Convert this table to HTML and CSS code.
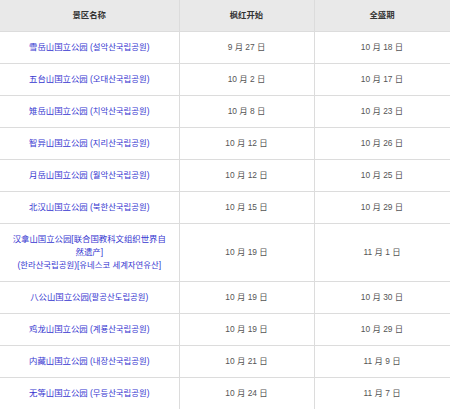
FILE: index.html
```html
<!DOCTYPE html>
<html lang="zh">
<head>
<meta charset="utf-8">
<title>枫叶时期</title>
<link rel="stylesheet" href="styles.css">
</head>
<body>
<table class="maple">
  <colgroup>
    <col class="c-name">
    <col class="c-start">
    <col class="c-peak">
  </colgroup>
  <thead>
    <tr><th>景区名称</th><th>枫红开始</th><th>全盛期</th></tr>
  </thead>
  <tbody>
    <tr><td><a href="#">雪岳山国立公园 (설악산국립공원)</a></td><td>9 月 27 日</td><td>10 月 18 日</td></tr>
    <tr><td><a href="#">五台山国立公园 (오대산국립공원)</a></td><td>10 月 2 日</td><td>10 月 17 日</td></tr>
    <tr><td><a href="#">雉岳山国立公园 (치악산국립공원)</a></td><td>10 月 8 日</td><td>10 月 23 日</td></tr>
    <tr><td><a href="#">智异山国立公园 (지리산국립공원)</a></td><td>10 月 12 日</td><td>10 月 26 日</td></tr>
    <tr><td><a href="#">月岳山国立公园 (월악산국립공원)</a></td><td>10 月 12 日</td><td>10 月 25 日</td></tr>
    <tr><td><a href="#">北汉山国立公园 (북한산국립공원)</a></td><td>10 月 15 日</td><td>10 月 29 日</td></tr>
    <tr><td><a href="#">汉拿山国立公园[联合国教科文组织世界自然遗产]<br>(한라산국립공원)[유네스코 세계자연유산]</a></td><td>10 月 19 日</td><td>11 月 1 日</td></tr>
    <tr><td><a href="#">八公山国立公园(팔공산도립공원)</a></td><td>10 月 19 日</td><td>10 月 30 日</td></tr>
    <tr><td><a href="#">鸡龙山国立公园 (계룡산국립공원)</a></td><td>10 月 19 日</td><td>10 月 29 日</td></tr>
    <tr><td><a href="#">内藏山国立公园 (내장산국립공원)</a></td><td>10 月 21 日</td><td>11 月 9 日</td></tr>
    <tr><td><a href="#">无等山国立公园 (무등산국립공원)</a></td><td>10 月 24 日</td><td>11 月 7 日</td></tr>
  </tbody>
</table>
</body>
</html>
```
FILE: styles.css
```css
html, body {
  margin: 0;
  padding: 0;
  background: #fff;
}
body {
  font-family: "Liberation Sans", "Noto Sans CJK SC", "Noto Sans CJK KR", sans-serif;
  font-size: 8.4px;
  line-height: 13px;
  color: #555;
}
.maple {
  width: 450px;
  border-collapse: collapse;
  table-layout: fixed;
}
.c-name { width: 179px; }
.c-start { width: 135px; }
.c-peak { width: 136px; }
.maple th {
  background: #e9e9e9;
  color: #333;
  font-weight: bold;
  padding: 9px 9px;
  border-right: 1px solid #dcdcdc;
  border-bottom: 1px solid #dcdcdc;
  text-align: center;
}
.maple td {
  padding: 9px 9px;
  border-right: 1px solid #dcdcdc;
  border-bottom: 1px solid #dcdcdc;
  text-align: center;
  vertical-align: middle;
}
.maple a {
  color: #3636d0;
  text-decoration: none;
}
```
